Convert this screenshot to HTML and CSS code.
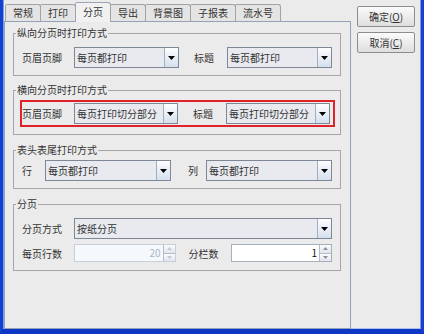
FILE: index.html
```html
<!DOCTYPE html>
<html lang="zh">
<head>
    <meta charset="UTF-8">
    <title>打印设置</title>
    <link rel="stylesheet" href="styles.css">
</head>
<body>
    <div class="window">
        <div class="tabpane">
            <div class="tabs">
                <div class="tab">常规</div>
                <div class="tab">打印</div>
                <div class="tab active">分页</div>
                <div class="tab">导出</div>
                <div class="tab">背景图</div>
                <div class="tab">子报表</div>
                <div class="tab">流水号</div>
            </div>

            <div class="panel">
                <fieldset class="group g1">
                    <legend>纵向分页时打印方式</legend>
                    <div class="row cols-a">
                        <span class="label">页眉页脚</span>
                        <div class="combo"><span class="combo-text">每页都打印</span><span class="combo-btn"><svg width="7" height="4" viewBox="0 0 7 4"><path d="M0 0H7L3.5 4Z" fill="#000"/></svg></span></div>
                        <span class="label label-2">标题</span>
                        <div class="combo"><span class="combo-text">每页都打印</span><span class="combo-btn"><svg width="7" height="4" viewBox="0 0 7 4"><path d="M0 0H7L3.5 4Z" fill="#000"/></svg></span></div>
                    </div>
                </fieldset>

                <fieldset class="group g2">
                    <legend>横向分页时打印方式</legend>
                    <div class="row cols-a highlight">
                        <span class="label">页眉页脚</span>
                        <div class="combo"><span class="combo-text">每页打印切分部分</span><span class="combo-btn"><svg width="7" height="4" viewBox="0 0 7 4"><path d="M0 0H7L3.5 4Z" fill="#000"/></svg></span></div>
                        <span class="label label-2">标题</span>
                        <div class="combo"><span class="combo-text">每页打印切分部分</span><span class="combo-btn"><svg width="7" height="4" viewBox="0 0 7 4"><path d="M0 0H7L3.5 4Z" fill="#000"/></svg></span></div>
                    </div>
                </fieldset>

                <fieldset class="group g3">
                    <legend>表头表尾打印方式</legend>
                    <div class="row cols-b">
                        <span class="label">行</span>
                        <div class="combo"><span class="combo-text">每页都打印</span><span class="combo-btn"><svg width="7" height="4" viewBox="0 0 7 4"><path d="M0 0H7L3.5 4Z" fill="#000"/></svg></span></div>
                        <span class="label label-2">列</span>
                        <div class="combo"><span class="combo-text">每页都打印</span><span class="combo-btn"><svg width="7" height="4" viewBox="0 0 7 4"><path d="M0 0H7L3.5 4Z" fill="#000"/></svg></span></div>
                    </div>
                </fieldset>

                <fieldset class="group g4">
                    <legend>分页</legend>
                    <div class="row cols-c">
                        <span class="label">分页方式</span>
                        <div class="combo wide"><span class="combo-text">按纸分页</span><span class="combo-btn"><svg width="7" height="4" viewBox="0 0 7 4"><path d="M0 0H7L3.5 4Z" fill="#000"/></svg></span></div>
                    </div>
                    <div class="row cols-d">
                        <span class="label">每页行数</span>
                        <div class="spin disabled">
                            <span class="spin-val">20</span>
                            <span class="spin-btns">
                                <span class="spin-up"><svg width="5" height="3" viewBox="0 0 5 3"><path d="M0 3H5L2.5 0Z"/></svg></span>
                                <span class="spin-down"><svg width="5" height="3" viewBox="0 0 5 3"><path d="M0 0H5L2.5 3Z"/></svg></span>
                            </span>
                        </div>
                        <span class="label label-2">分栏数</span>
                        <div class="spin">
                            <span class="spin-val">1</span>
                            <span class="spin-btns">
                                <span class="spin-up"><svg width="5" height="3" viewBox="0 0 5 3"><path d="M0 3H5L2.5 0Z"/></svg></span>
                                <span class="spin-down"><svg width="5" height="3" viewBox="0 0 5 3"><path d="M0 0H5L2.5 3Z"/></svg></span>
                            </span>
                        </div>
                    </div>
                </fieldset>
            </div>
        </div>

        <div class="side">
            <button class="btn">确定(<u>O</u>)</button>
            <button class="btn">取消(<u>C</u>)</button>
        </div>
    </div>
</body>
</html>
```

FILE: styles.css
```css
body {
    margin: 0;
    font-family: "Noto Sans CJK SC", "Noto Sans", sans-serif;
    font-size: 10px;
    color: #333;
}

.window {
    width: 424px;
    height: 334px;
    box-sizing: border-box;
    display: flex;
    background-color: #ebebeb;
    border-left: 3px solid #1240cf;
    border-right: 3px solid #1240cf;
    border-bottom: 5px solid #0d37c4;
    box-shadow: inset 1px 0 0 #7f9ce8, inset -1px 0 0 #7f9ce8, inset 0 -1px 0 #a9c0f0;
}

/* tabbed pane */
.tabpane {
    width: 347px;
    margin-left: 1px;
    display: flex;
    flex-direction: column;
}

.tabs {
    display: flex;
    align-items: flex-end;
    height: 19px;
    padding-top: 2px;
    padding-left: 1px;
    position: relative;
    z-index: 1;
}

.tab {
    height: 16px;
    line-height: 16px;
    padding: 0 7px;
    margin-left: -1px;
    border: 1px solid #a3a3a3;
    border-bottom: none;
    border-radius: 2px 3px 0 0;
    background-color: #e4e4e4;
    color: #333;
}

.tab:first-child {
    margin-left: 0;
}

.tab.active {
    height: 19px;
    line-height: 18px;
    margin-bottom: -1px;
    background-color: #f1f1f1;
    border-color: #9aa4b4;
}

.panel {
    flex: 1;
    border: 1px solid #94a2b8;
    padding: 4px 9px 0 8px;
}

/* group boxes */
.group {
    margin: 0;
    padding: 7px 8px 7px 8px;
    border: 1px solid #a6a6a6;
    min-width: 0;
}

.group legend {
    padding: 0 1px;
    margin-left: -6px;
    line-height: 14px;
    color: #333;
}

.g2 {
    margin-top: 7px;
    padding-top: 3px;
}

.g3 {
    margin-top: 8px;
    padding-top: 3px;
}

.g4 {
    margin-top: 8px;
    padding-bottom: 8px;
}

.row {
    display: grid;
    align-items: center;
}

.cols-a {
    grid-template-columns: 52px 1fr 48px 1fr;
}

.cols-a .label-2 {
    padding-left: 15px;
}

.cols-b {
    grid-template-columns: 23px 1fr 35px 1fr;
}

.cols-b .label-2 {
    padding-left: 17px;
}

.cols-c {
    grid-template-columns: 52px 1fr;
}

.cols-d {
    grid-template-columns: 52px 1fr 55px 1fr;
    margin-top: 5px;
}

.cols-d .label-2 {
    padding-left: 13px;
}

.highlight {
    border: 2px solid #e0232b;
    margin: 0 -3px 0 -2px;
    padding: 1px 3px 1px 0;
}

.label {
    white-space: nowrap;
}

/* combo box */
.combo {
    display: flex;
    height: 21px;
    box-sizing: border-box;
    border: 1px solid #7d8795;
}

.combo-text {
    flex: 1;
    padding-left: 2px;
    line-height: 19px;
    background-color: #e8eaef;
    white-space: nowrap;
    overflow: hidden;
}

.combo-btn {
    width: 13px;
    display: flex;
    align-items: center;
    justify-content: center;
    border-left: 1px solid #a3aebd;
    background: linear-gradient(#fcfdfe, #d5e0ee);
}

/* spinner */
.spin {
    display: flex;
    height: 18px;
    box-sizing: border-box;
    border: 1px solid #a5afbd;
}

.spin-val {
    flex: 1;
    text-align: right;
    padding-right: 2px;
    line-height: 16px;
    background-color: #fff;
    color: #111;
}

.spin-btns {
    width: 11px;
    display: flex;
    flex-direction: column;
    border-left: 1px solid #b4bcc8;
}

.spin-btns span {
    flex: 1;
    display: flex;
    align-items: center;
    justify-content: center;
    background: linear-gradient(#fafbfc, #e1e6ec);
    fill: #8a919b;
}

.spin-up {
    border-bottom: 1px solid #b4bcc8;
}

.spin.disabled {
    border-color: #c6ced9;
}

.spin.disabled .spin-val {
    background-color: #f5f8fc;
    color: #a9b5c6;
}

.spin.disabled .spin-btns span {
    fill: #c3c9d1;
}

/* buttons */
.side {
    display: flex;
    flex-direction: column;
    gap: 5px;
    padding: 6px 0 0 6px;
}

.btn {
    width: 58px;
    height: 21px;
    padding: 0;
    font-family: inherit;
    font-size: 10px;
    color: #333;
    border: 1px solid #8d8d8d;
    border-radius: 2px;
    background: linear-gradient(#fbfbfb, #dedede);
}
```
